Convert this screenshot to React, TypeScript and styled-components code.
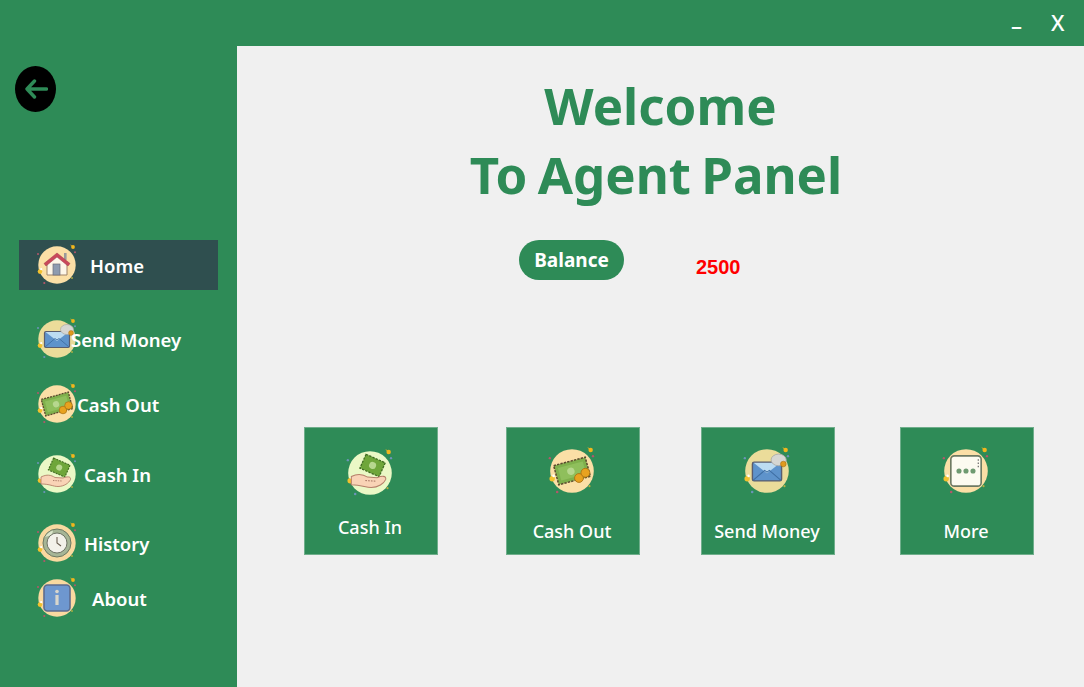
import React from "react";
import styled, { createGlobalStyle } from "styled-components";

const FONT = `"Noto Sans", "Open Sans", "DejaVu Sans", sans-serif`;
const GREEN = "#2E8B57";

const Global = createGlobalStyle`
  html, body { margin: 0; padding: 0; height: 100%; overflow: hidden; background: #f0f0f0; }
  #root { height: 100%; }
`;

const Window = styled.div`
  width: 1084px;
  height: 687px;
  display: flex;
  flex-direction: column;
  font-family: ${FONT};
  background: #f0f0f0;
`;
const TitleBar = styled.header`
  height: 46px;
  flex: none;
  background: ${GREEN};
  display: flex;
  justify-content: flex-end;
  align-items: flex-start;
  color: #fff;
`;
const WinButton = styled.span<{ $w: number; $top: number }>`
  width: ${(p) => p.$w}px;
  margin-top: ${(p) => p.$top}px;
  text-align: left;
  font-size: 22px;
  line-height: 26px;
  font-weight: 500;
`;
const Body = styled.div`
  flex: 1;
  display: flex;
  min-height: 0;
`;
const Sidebar = styled.aside`
  width: 237px;
  flex: none;
  background: ${GREEN};
  padding: 20px 0 0 15px;
  box-sizing: border-box;
`;
const BackButton = styled.div`
  width: 41px;
  height: 46px;
  border-radius: 50%;
  background: #000;
  display: flex;
  align-items: center;
  justify-content: center;
`;
const Nav = styled.nav`
  margin: 128px 0 0 4px;
  width: 199px;
`;
const NavRow = styled.div<{ $gap: number; $active?: boolean }>`
  height: 50px;
  margin-top: ${(p) => p.$gap}px;
  padding-left: 14px;
  display: flex;
  align-items: center;
  background: ${(p) => (p.$active ? "#2F4F4F" : "transparent")};
  color: #fff;
`;
const NavLabel = styled.span<{ $indent: number }>`
  margin: 1px 0 0 ${(p) => p.$indent}px;
  font-size: 18.5px;
  font-weight: 600;
  white-space: nowrap;
  position: relative;
`;
const Main = styled.main`
  flex: 1;
  background: #f0f0f0;
  min-width: 0;
`;
const Title = styled.h1`
  margin: 25px 0 0;
  text-align: center;
  color: ${GREEN};
  font-size: 51px;
  line-height: 69px;
  font-weight: 700;
  word-spacing: -3px;
`;
const TitleLine = styled.div<{ $shift: number }>`
  padding-right: ${(p) => p.$shift}px;
`;
const BalanceRow = styled.div`
  margin-top: 31px;
  padding-left: 282px;
  display: flex;
  align-items: center;
`;
const BalancePill = styled.div`
  width: 105px;
  height: 40px;
  border-radius: 20px;
  background: ${GREEN};
  color: #fff;
  font-size: 19px;
  font-weight: 700;
  display: flex;
  align-items: center;
  justify-content: center;
`;
const BalanceValue = styled.span`
  margin: 14px 0 0 72px;
  color: #ff0000;
  font-family: "Liberation Sans", Arial, sans-serif;
  font-size: 20px;
  font-weight: 700;
`;
const Tiles = styled.div`
  margin-top: 147px;
  padding-left: 67px;
  display: flex;
`;
const Tile = styled.div<{ $gap: number; $iconTop: number; $labelGap: number }>`
  width: 134px;
  height: 128px;
  box-sizing: border-box;
  margin-left: ${(p) => p.$gap}px;
  background: ${GREEN};
  outline: 1px solid #6fae8b;
  outline-offset: -1px;
  padding: ${(p) => p.$iconTop}px 2px 0 0;
  display: flex;
  flex-direction: column;
  align-items: center;
  color: #fff;
  gap: ${(p) => p.$labelGap}px;
`;
const TileLabel = styled.span`
  font-size: 18px;
  font-weight: 500;
  line-height: 26px;
  white-space: nowrap;
`;
const IconSvg = styled.svg`
  flex: none;
  display: block;
`;

type Kind = "home" | "mail" | "money" | "cashin" | "clock" | "info" | "more";

const DISC: Record<Kind, string> = {
  home: "#FBDFA6",
  mail: "#EBDC9A",
  money: "#FBDFA6",
  cashin: "#EBF8C6",
  clock: "#F9D9A0",
  info: "#F9D9A0",
  more: "#FBDFA6",
};

function Glyph({ kind }: { kind: Kind }) {
  switch (kind) {
    case "home":
      return (
        <g>
          <rect x="7" y="-12" width="2.6" height="7" fill="#9A9A9A" />
          <path d="M-10 -3 L0 -10 L10 -3 V10 H-10 Z" fill="#FDF6E8" stroke="#A08468" strokeWidth="1" />
          <rect x="-4" y="-1" width="7" height="11" fill="#8E9BB0" stroke="#6E6E7A" strokeWidth=".7" />
          <path d="M-13 -1.5 L0 -12 L13 -1.5 L11 1 L0 -8 L-11 1 Z" fill="#C9485B" stroke="#A33A4A" strokeWidth=".5" />
        </g>
      );
    case "mail":
      return (
        <g>
          <rect x="-12.5" y="-7.5" width="25" height="16" rx="1.5" fill="#5E93CB" stroke="#5A5D6E" strokeWidth="1.2" />
          <path d="M-11.5 -7 H11.5 L0 2 Z" fill="#BCDCF2" />
          <path d="M-12 8 L-2 -0.5 L0 1 L2 -0.5 L12 8" fill="none" stroke="#3E6EA3" strokeWidth=".9" />
          <ellipse cx="10" cy="-9.5" rx="6.5" ry="5" fill="#D6D6D2" stroke="#A8A8A4" strokeWidth=".7" />
          <circle cx="14" cy="-6" r="2.4" fill="#E09A1E" stroke="#A86E10" strokeWidth=".5" />
        </g>
      );
    case "money":
      return (
        <g>
          <g transform="rotate(-15)">
            <rect x="-14" y="-8.5" width="28" height="17" fill="#7FB04C" stroke="#5B4A2E" strokeWidth="1.3" strokeDasharray="2 1" />
            <rect x="-11" y="-5.5" width="22" height="11" fill="#8FBF5C" />
            <circle cx="-1" cy="0" r="3.2" fill="#B7D78E" />
          </g>
          <circle cx="6" cy="6" r="3.8" fill="#E8A21F" stroke="#A86E10" strokeWidth=".7" />
          <circle cx="11.5" cy="1.5" r="3.8" fill="#E8A21F" stroke="#A86E10" strokeWidth=".7" />
        </g>
      );
    case "cashin":
      return (
        <g>
          <g transform="rotate(24 2 -6)">
            <rect x="-7" y="-13" width="18" height="13" fill="#6FA63A" stroke="#3F6B22" strokeWidth="1.1" strokeDasharray="2 1" />
            <circle cx="2" cy="-6.5" r="3" fill="#B7D78E" />
          </g>
          <path d="M-16 3 C-10 0 -6 1 -2 3.5 L6 4 C10 2.5 14 2 13.5 5.5 C12 9 7 12.5 1 12.5 C-4 12.5 -7 10 -16 10 Z" fill="#F9D3B6" stroke="#B5806A" strokeWidth=".9" />
          <path d="M-4 6.5 L5 7" stroke="#9C6A58" strokeWidth=".8" strokeDasharray="1.4 1" />
        </g>
      );
    case "clock":
      return (
        <g>
          <circle r="14" fill="#A6B596" stroke="#6F7A62" strokeWidth="1" />
          <path d="M-12 -6 A13.5 13.5 0 0 1 -4 -12.5 L-5 -8 Z" fill="#DCE6CC" />
          <circle r="10" fill="#F3F1EA" stroke="#707466" strokeWidth="1" />
          <path d="M0 -6 V0 L4 3" fill="none" stroke="#6A5E50" strokeWidth="1.1" />
        </g>
      );
    case "info":
      return (
        <g>
          <rect x="-13" y="-13" width="26" height="26" rx="3.5" fill="#6E97CF" stroke="#5E6C8E" strokeWidth="1.6" />
          <circle cy="-6.5" r="1.8" fill="#D9D6CC" />
          <rect x="-1.6" y="-3" width="3.2" height="10" fill="#D9D6CC" />
        </g>
      );
    case "more":
      return (
        <g>
          <rect x="-13" y="-13" width="26" height="26" rx="3" fill="#FCFBF0" stroke="#6E7A62" strokeWidth="1.4" />
          <circle cx="-6" cy="0" r="2.2" fill="#6E9A70" />
          <circle cx="0" cy="0" r="2.2" fill="#6E9A70" />
          <circle cx="6" cy="0" r="2.2" fill="#6E9A70" />
          <path d="M10.5 -10 V-3" stroke="#555" strokeWidth=".9" strokeDasharray="1.2 1.6" />
        </g>
      );
  }
}

function Badge({ kind, size }: { kind: Kind; size: number }) {
  const dot = kind === "mail" || kind === "cashin" ? "#6C94B8" : "#B5566A";
  return (
    <IconSvg width={size} height={size} viewBox="-24 -24 48 48" aria-hidden="true">
      <circle r="18.7" fill={DISC[kind]} />
      <circle cx="16" cy="-18" r="1.9" fill="#F2B61C" />
      <path d="M13.5 -20 L15 -19" stroke="#F2B61C" strokeWidth=".7" />
      <circle cx="-17" cy="6.6" r="2.3" fill="#F2C12E" />
      <circle cx="-15.8" cy="4.2" r="1.1" fill="#fff" />
      <circle cx="-19" cy="-11" r="1" fill={dot} />
      <circle cx="18" cy="-12.7" r="1" fill={dot} />
      <circle cx="-12.7" cy="18" r="1.1" fill={dot} />
      <circle cx="15" cy="13" r=".9" fill="#B8B040" />
      <Glyph kind={kind} />
    </IconSvg>
  );
}

const NAV: { label: string; kind: Kind; gap: number; indent: number; active?: boolean }[] = [
  { label: "Home", kind: "home", gap: 0, indent: 9, active: true },
  { label: "Send Money", kind: "mail", gap: 24, indent: -10 },
  { label: "Cash Out", kind: "money", gap: 15, indent: -4 },
  { label: "Cash In", kind: "cashin", gap: 20, indent: 3 },
  { label: "History", kind: "clock", gap: 19, indent: 3 },
  { label: "About", kind: "info", gap: 5, indent: 11 },
];

const TILES: { label: string; kind: Kind; gap: number; top: number; labelGap: number }[] = [
  { label: "Cash In", kind: "cashin", gap: 0, top: 18, labelGap: 13 },
  { label: "Cash Out", kind: "money", gap: 68, top: 16, labelGap: 19 },
  { label: "Send Money", kind: "mail", gap: 61, top: 16, labelGap: 19 },
  { label: "More", kind: "more", gap: 65, top: 16, labelGap: 19 },
];

export default function App() {
  return (
    <Window>
      <Global />
      <TitleBar>
        <WinButton $w={40} $top={12}>–</WinButton>
        <WinButton $w={33} $top={9}>X</WinButton>
      </TitleBar>
      <Body>
        <Sidebar>
          <BackButton>
            <svg width="24" height="20" viewBox="0 0 24 20" aria-hidden="true">
              <path d="M22.5 10 H3 M10.5 2 L3 10 L10.5 18" fill="none" stroke={GREEN} strokeWidth="3.4" strokeLinecap="round" strokeLinejoin="round" />
            </svg>
          </BackButton>
          <Nav>
            {NAV.map((n) => (
              <NavRow key={n.label} $gap={n.gap} $active={n.active}>
                <Badge kind={n.kind} size={48} />
                <NavLabel $indent={n.indent}>{n.label}</NavLabel>
              </NavRow>
            ))}
          </Nav>
        </Sidebar>
        <Main>
          <Title>
            <TitleLine $shift={0}>Welcome</TitleLine>
            <TitleLine $shift={9}>To Agent Panel</TitleLine>
          </Title>
          <BalanceRow>
            <BalancePill>Balance</BalancePill>
            <BalanceValue>2500</BalanceValue>
          </BalanceRow>
          <Tiles>
            {TILES.map((t) => (
              <Tile key={t.label} $gap={t.gap} $iconTop={t.top} $labelGap={t.labelGap}>
                <Badge kind={t.kind} size={56} />
                <TileLabel>{t.label}</TileLabel>
              </Tile>
            ))}
          </Tiles>
        </Main>
      </Body>
    </Window>
  );
}
